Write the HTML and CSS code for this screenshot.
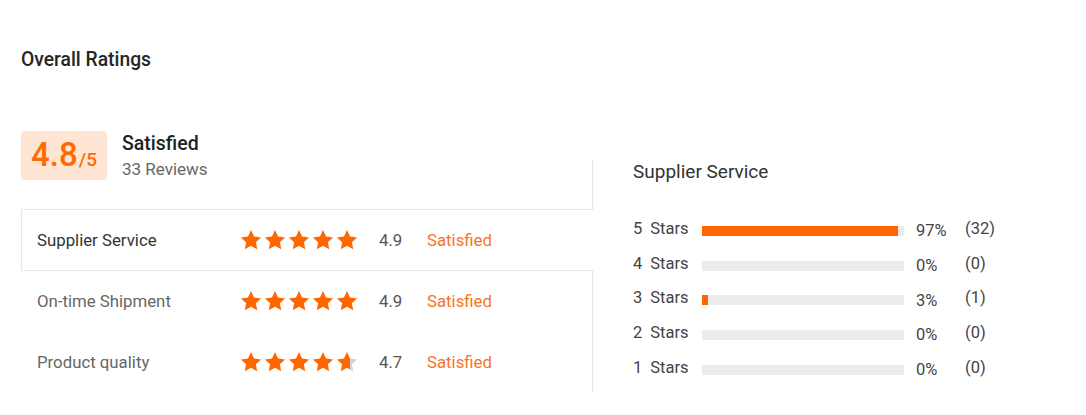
FILE: index.html
```html
<!DOCTYPE html>
<html>
<head>
<meta charset="utf-8">
<link rel="stylesheet" href="styles.css">
</head>
<body>
<svg width="0" height="0" class="defs">
  <defs>
    <symbol id="star" viewBox="0 0 24 24"><path d="M12 1.2l3.3 7.1 7.7.9-5.7 5.3 1.5 7.7L12 18.3l-6.8 3.9 1.5-7.7L1 9.2l7.7-.9z"/></symbol>
    <linearGradient id="partial" x1="0" x2="1" y1="0" y2="0">
      <stop offset="66%" stop-color="#ff6600"/>
      <stop offset="66%" stop-color="#d3d3d3"/>
    </linearGradient>
  </defs>
</svg>
<div class="page">
  <h2 class="title">Overall Ratings</h2>
  <div class="body">
    <div class="left">
      <div class="summary">
        <div class="score-box"><span class="big">4.8</span><span class="small">/5</span></div>
        <div class="summary-text">
          <div class="summary-label">Satisfied</div>
          <div class="summary-count">33 Reviews</div>
        </div>
      </div>
      <div class="tabs">
        <div class="tab active">
          <span class="tab-label">Supplier Service</span>
          <span class="stars">
            <svg class="star"><use href="#star"/></svg><svg class="star"><use href="#star"/></svg><svg class="star"><use href="#star"/></svg><svg class="star"><use href="#star"/></svg><svg class="star"><use href="#star"/></svg>
          </span>
          <span class="tab-score">4.9</span>
          <span class="tab-status">Satisfied</span>
        </div>
        <div class="tab">
          <span class="tab-label">On-time Shipment</span>
          <span class="stars">
            <svg class="star"><use href="#star"/></svg><svg class="star"><use href="#star"/></svg><svg class="star"><use href="#star"/></svg><svg class="star"><use href="#star"/></svg><svg class="star"><use href="#star"/></svg>
          </span>
          <span class="tab-score">4.9</span>
          <span class="tab-status">Satisfied</span>
        </div>
        <div class="tab">
          <span class="tab-label">Product quality</span>
          <span class="stars">
            <svg class="star"><use href="#star"/></svg><svg class="star"><use href="#star"/></svg><svg class="star"><use href="#star"/></svg><svg class="star"><use href="#star"/></svg><svg class="star star-partial"><use href="#star"/></svg>
          </span>
          <span class="tab-score">4.7</span>
          <span class="tab-status">Satisfied</span>
        </div>
      </div>
    </div>
    <div class="right">
      <div class="right-title">Supplier Service</div>
      <div class="dist">
        <div class="dist-row"><span class="dist-label"><span class="num">5</span>Stars</span><span class="bar"><span class="fill" style="width:97%"></span></span><span class="pct">97%</span><span class="cnt">(32)</span></div>
        <div class="dist-row"><span class="dist-label"><span class="num">4</span>Stars</span><span class="bar"><span class="fill" style="width:0%"></span></span><span class="pct">0%</span><span class="cnt">(0)</span></div>
        <div class="dist-row"><span class="dist-label"><span class="num">3</span>Stars</span><span class="bar"><span class="fill" style="width:3%"></span></span><span class="pct">3%</span><span class="cnt">(1)</span></div>
        <div class="dist-row"><span class="dist-label"><span class="num">2</span>Stars</span><span class="bar"><span class="fill" style="width:0%"></span></span><span class="pct">0%</span><span class="cnt">(0)</span></div>
        <div class="dist-row"><span class="dist-label"><span class="num">1</span>Stars</span><span class="bar"><span class="fill" style="width:0%"></span></span><span class="pct">0%</span><span class="cnt">(0)</span></div>
      </div>
    </div>
  </div>
</div>
</body>
</html>
```
FILE: styles.css
```css
* { box-sizing: border-box; }
html, body { margin: 0; padding: 0; background: #fff; }
body { font-family: Roboto, "Liberation Sans", Arial, sans-serif; color: #333; }
.defs { position: absolute; width: 0; height: 0; overflow: hidden; }

.page { padding: 48px 0 0 21px; }
.title { margin: 0; font-size: 19.3px; line-height: 24px; font-weight: 500; color: #262626; }

.body { display: flex; align-items: flex-end; margin-top: 59px; }
.left { width: 571px; flex: none; }

.summary { display: flex; align-items: flex-start; height: 49px; }
.score-box {
  width: 86px; height: 49px; border-radius: 4px; background: #ffe5d3;
  display: flex; align-items: baseline; justify-content: center; padding-top: 4px;
  color: #ff6a00;
}
.big { font-size: 33px; line-height: 39px; font-weight: 500; }
.small { font-size: 19px; line-height: 20px; margin-left: 1px; font-weight: 500; }
.summary-text { margin-left: 15px; margin-top: 2px; }
.summary-label { font-size: 19.5px; line-height: 22px; font-weight: 500; color: #222; }
.summary-count { font-size: 17px; line-height: 20px; color: #666; margin-top: 4px; }

.tabs { margin-top: 29px; }
.tab {
  height: 62px; display: flex; align-items: center; padding-left: 15px;
  border-top: 1px solid transparent; border-bottom: 1px solid transparent; border-left: 1px solid transparent;
  color: #666; font-size: 16.8px;
  margin-top: -1px;
}
.tab:first-child { margin-top: 0; }
.tab.active {
  border-color: #e6e6e6; background: #fff; color: #333;
  margin-right: -1px; position: relative; z-index: 1;
}
.tab-label { width: 203px; flex: none; }
.stars { display: flex; gap: 2px; width: 139px; flex: none; }
.star { width: 22px; height: 22px; fill: #ff6600; }
.star-partial { fill: url(#partial); }
.tab-score { width: 48px; flex: none; color: #555; }
.tab-status { color: #f7742a; }

.right {
  flex: 1; height: 233px; border-left: 1px solid #e6e6e6; padding-left: 40px;
}
.right-title { font-size: 19px; line-height: 24px; color: #333; }
.dist { margin-top: 27px; }
.dist-row { height: 34.7px; display: flex; align-items: center; font-size: 16.5px; color: #444; }
.dist-label { width: 69px; flex: none; }
.num { margin-right: 8px; }
.bar { width: 202px; height: 10px; background: #ebecee; flex: none; display: flex; margin-top: 5px; margin-right: 12px; }
.fill { background: #ff6600; height: 100%; }
.pct { width: 49px; flex: none; margin-top: 5px; }
.cnt { }
```
